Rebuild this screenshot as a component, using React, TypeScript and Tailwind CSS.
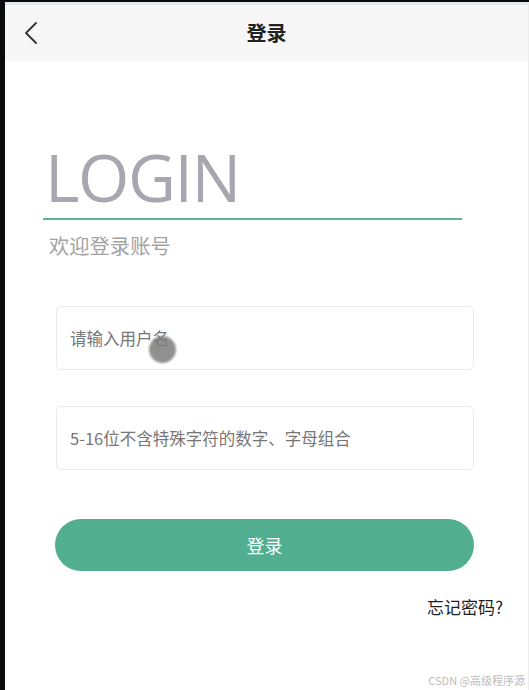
import React from "react";

const cjk = { fontFamily: '"Noto Sans CJK SC", "Noto Sans", sans-serif' };

const Field: React.FC<{ placeholder: string }> = ({ placeholder }) => (
  <div className="h-[64px] rounded-[5px] border border-[#ebebeb] bg-white flex items-center px-[13px]">
    <input
      className="w-full bg-transparent outline-none text-[16.5px] text-[#333] placeholder:text-[#767676]"
      style={cjk}
      placeholder={placeholder}
    />
  </div>
);

export default function App() {
  return (
    <div className="w-[529px] h-[690px] bg-[#0b0b0b] pt-[2px] pl-[5px] flex overflow-hidden">
      <div className="flex-1 flex flex-col bg-white relative border-r border-[#ececec]">
        {/* top bar */}
        <div className="h-[3px] bg-[#e3e7ee]" />
        <header className="h-[56px] bg-[#f7f7f7] flex items-center relative">
          <button className="absolute left-[14px] top-[14px] w-[24px] h-[28px] flex items-center justify-center">
            <svg width="16" height="24" viewBox="0 0 16 24" fill="none">
              <path d="M13 2 L3 12 L13 22" stroke="#333" strokeWidth="1.8" strokeLinecap="round" strokeLinejoin="round" />
            </svg>
          </button>
          <h1 className="flex-1 text-center text-[20px] font-semibold text-[#222]" style={cjk}>
            登录
          </h1>
        </header>

        {/* title */}
        <div className="pl-[38px] pt-[82px]">
          <div
            className="pl-[2px] text-[66px] leading-[66px] text-[#a8a7b0] tracking-[-1.4px]"
            style={{ fontFamily: '"Open Sans", "Noto Sans", sans-serif' }}
          >
            LOGIN
          </div>
          <div className="mt-[9px] w-[419px] h-[2px] bg-[#5db596]" />
          <p className="mt-[13px] pl-[6px] text-[20.3px] leading-[24px] text-[#a3a3a3]" style={cjk}>
            欢迎登录账号
          </p>
        </div>

        {/* form */}
        <div className="ml-[51px] w-[418px] mt-[49px] flex flex-col gap-[36px]">
          <Field placeholder="请输入用户名" />
          <Field placeholder="5-16位不含特殊字符的数字、字母组合" />
        </div>

        <div className="ml-[50px] w-[419px] mt-[49px]">
          <button
            className="w-full h-[52px] rounded-full bg-[#51ae8f] text-white text-[18px]"
            style={cjk}
          >
            登录
          </button>
        </div>

        <div className="flex justify-end pr-[25px] mt-[23px]">
          <a className="text-[17px] text-[#1f1f1f]" style={cjk}>
            忘记密码?
          </a>
        </div>

        <div className="mt-auto mb-[2px] flex justify-end pr-[3px]">
          <span className="text-[11px] text-[#bdbdbd]" style={cjk}>
            CSDN @高级程序源
          </span>
        </div>

        {/* touch indicator */}
        <div className="absolute left-[144px] top-[334px] w-[27px] h-[27px] rounded-full bg-[#7d7d7d] opacity-85 blur-[1px]" />
      </div>
    </div>
  );
}
